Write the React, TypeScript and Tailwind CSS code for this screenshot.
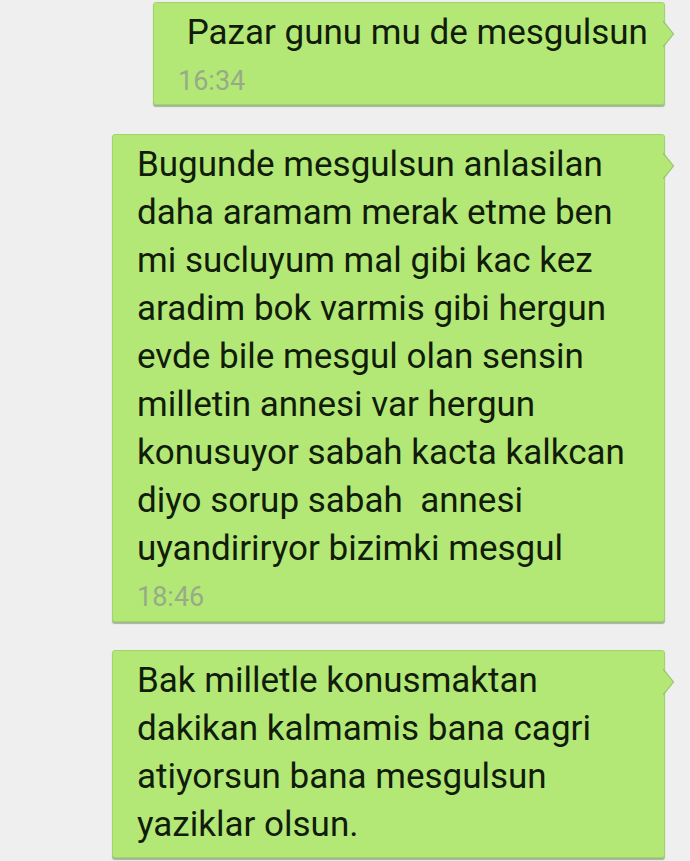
const thread = [
  {
    id: 1,
    width: "w-[512px]",
    lines: ["\u00a0Pazar gunu mu de mesgulsun"],
    time: "16:34",
    pad: "pb-[1px] mb-[1px]",
    timeGap: "mt-[2px]",
  },
  {
    id: 2,
    width: "w-[553px]",
    lines: [
      "Bugunde mesgulsun anlasilan",
      "daha aramam merak etme ben",
      "mi sucluyum mal gibi kac kez",
      "aradim bok varmis gibi hergun",
      "evde bile mesgul olan sensin",
      "milletin annesi var hergun",
      "konusuyor sabah kacta kalkcan",
      "diyo sorup sabah  annesi",
      "uyandiriryor bizimki mesgul",
    ],
    time: "18:46",
    pad: "pb-[2px]",
    timeGap: "mt-[2px]",
  },
  {
    id: 3,
    width: "w-[553px]",
    lines: [
      "Bak milletle konusmaktan",
      "dakikan kalmamis bana cagri",
      "atiyorsun bana mesgulsun",
      "yaziklar olsun.",
    ],
    time: null,
    pad: "pb-[8px]",
    timeGap: "mt-0",
  },
];

function Tail() {
  return (
    <svg
      className="absolute left-[calc(100%-2px)] top-[17px]"
      width="14"
      height="28"
      viewBox="0 0 14 28"
    >
      <path d="M0 1 L11 14 L0 27 Z" fill="#b3e877" />
      <path d="M1 1 L11.5 14 L1 27" fill="none" stroke="#97c964" strokeWidth="1.2" />
    </svg>
  );
}

function Bubble({ m }: { m: (typeof thread)[number] }) {
  return (
    <div
      className={`relative ${m.width} ${m.pad} bg-[#b3e877] border border-[#a2d46c] rounded-[3px] shadow-[0_2px_1px_rgba(70,110,40,0.45)] pl-[24px] pr-3 pt-[6px]`}
    >
      <Tail />
      <div className="text-[35px] leading-[48px] text-[#111c0a]">
        {m.lines.map((l, i) => (
          <div key={i} className="whitespace-pre">
            {l}
          </div>
        ))}
      </div>
      {m.time && (
        <div className={`${m.timeGap} text-[27px] leading-[44px] text-[#98ab86]`}>{m.time}</div>
      )}
    </div>
  );
}

export default function App() {
  return (
    <div
      className="w-[690px] h-[861px] overflow-hidden bg-[#efefef] flex flex-col items-end gap-[28px] pt-[2px] pr-[25px]"
      style={{ fontFamily: "Roboto, 'Noto Sans', sans-serif" }}
    >
      {thread.map((m) => (
        <Bubble key={m.id} m={m} />
      ))}
    </div>
  );
}
